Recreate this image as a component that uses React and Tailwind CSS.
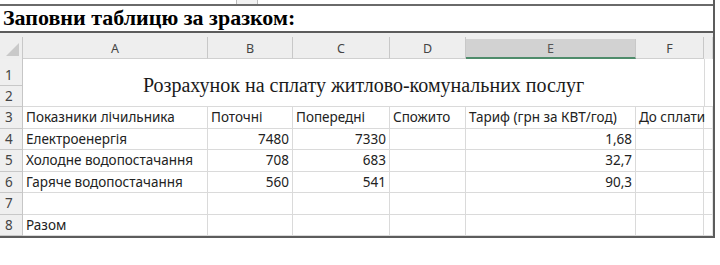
import React from 'react'

const COLS = ['A', 'B', 'C', 'D', 'E', 'F']
const GRID = 'grid grid-cols-[23px_185px_85px_97px_76px_170px_68px_9px]'

const ROWS = [
  { n: 3, h: 'h-[22px]', cells: ['Показники лічильника', 'Поточні', 'Попередні', 'Спожито', 'Тариф (грн за КВТ/год)', 'До сплати'] },
  { n: 4, h: 'h-[21px]', cells: ['Електроенергія', '7480', '7330', '', '1,68', ''] },
  { n: 5, h: 'h-[22px]', cells: ['Холодне водопостачання', '708', '683', '', '32,7', ''] },
  { n: 6, h: 'h-[21px]', cells: ['Гаряче водопостачання', '560', '541', '', '90,3', ''] },
  { n: 7, h: 'h-[22px]', cells: ['', '', '', '', '', ''] },
  { n: 8, h: 'h-[21px]', cells: ['Разом', '', '', '', '', ''] },
]

// numbers sit on the right of the cell, text on the left
const isNum = (v) => /^[0-9][0-9,]*$/.test(v)

export default function App() {
  return (
    <div className="w-[720px] h-[265px] bg-white overflow-hidden">
      <div className="w-[715px] border-r-2 border-[#5c5c5c]">
        {/* strip left over from the page above */}
        <div className="h-[4px] relative">
          <div className="absolute left-[236px] top-0 w-[22px] h-[4px] border-x border-[#bbb] bg-[#f2f2f2]" />
        </div>
        <div className="border-t-2 border-[#6a6a6a] h-[27px] flex items-end pl-[3px] pb-[2px]">
          <span className="font-['Liberation_Serif',serif] font-bold text-[22px] leading-none text-black">
            Заповни таблицю за зразком:
          </span>
        </div>

        <div className="border-t-2 border-b-2 border-[#5c5c5c] font-['Noto_Sans',sans-serif] text-[#222]">
          {/* column letters */}
          <div className={`${GRID} h-[26px] bg-[#eeeeee] items-end`}>
            <div className="h-[22px] border-r border-[#c8c8c8] relative">
              <div className="absolute right-[3px] bottom-[3px] w-0 h-0 border-l-[13px] border-l-transparent border-b-[13px] border-b-[#c9c9c9]" />
            </div>
            {COLS.map((c) => (
              <div
                key={c}
                className={
                  c === 'E'
                    ? 'h-[20px] bg-[#d2d2d2] border-b-2 border-[#4f8c6b] border-r border-r-[#c8c8c8] flex items-center justify-center pt-[3px] text-[12.5px] text-[#555]'
                    : 'h-[22px] border-r border-[#c8c8c8] border-b border-b-[#d0d0d0] flex items-center justify-center pt-[3px] text-[12.5px] text-[#444]'
                }
              >
                {c}
              </div>
            ))}
            <div className="h-[22px] border-r border-[#d6d6d6]" />
          </div>

          {/* rows 1-2, merged title */}
          <div className={`${GRID}`}>
            <div className="flex flex-col bg-[#efefef] border-r border-[#c6c6c6] text-[13.5px] text-[#444]">
              <div className="h-[27px] flex items-end pb-[0px] pl-[5px] border-b border-[#c8c8c8]">1</div>
              <div className="h-[21px] flex items-center pl-[5px] border-b border-[#c8c8c8]">2</div>
            </div>
            <div className="col-span-6 flex items-center justify-center pt-[4px] border-b border-[#dadada] font-['Liberation_Serif',serif] text-[20px] text-[#1a1a1a]">
              Розрахунок на сплату житлово-комунальних послуг
            </div>
            <div className="border-l border-b border-[#dadada]" />
          </div>

          {ROWS.map((r) => (
            <div key={r.n} className={`${GRID} ${r.h}`}>
              <div className="bg-[#efefef] border-r border-[#c6c6c6] border-b border-b-[#c8c8c8] flex items-center pl-[5px] text-[13.5px] text-[#444]">
                {r.n}
              </div>
              {r.cells.map((v, i) => (
                <div
                  key={i}
                  className={`border-r border-b border-[#dadada] flex items-center px-[3px] text-[13.5px] whitespace-nowrap ${
                    isNum(v) ? 'justify-end' : 'justify-start'
                  }`}
                >
                  {v}
                </div>
              ))}
              <div className="border-b border-[#dadada] border-r border-r-[#e4e4e4]" />
            </div>
          ))}
        </div>
      </div>
    </div>
  )
}
